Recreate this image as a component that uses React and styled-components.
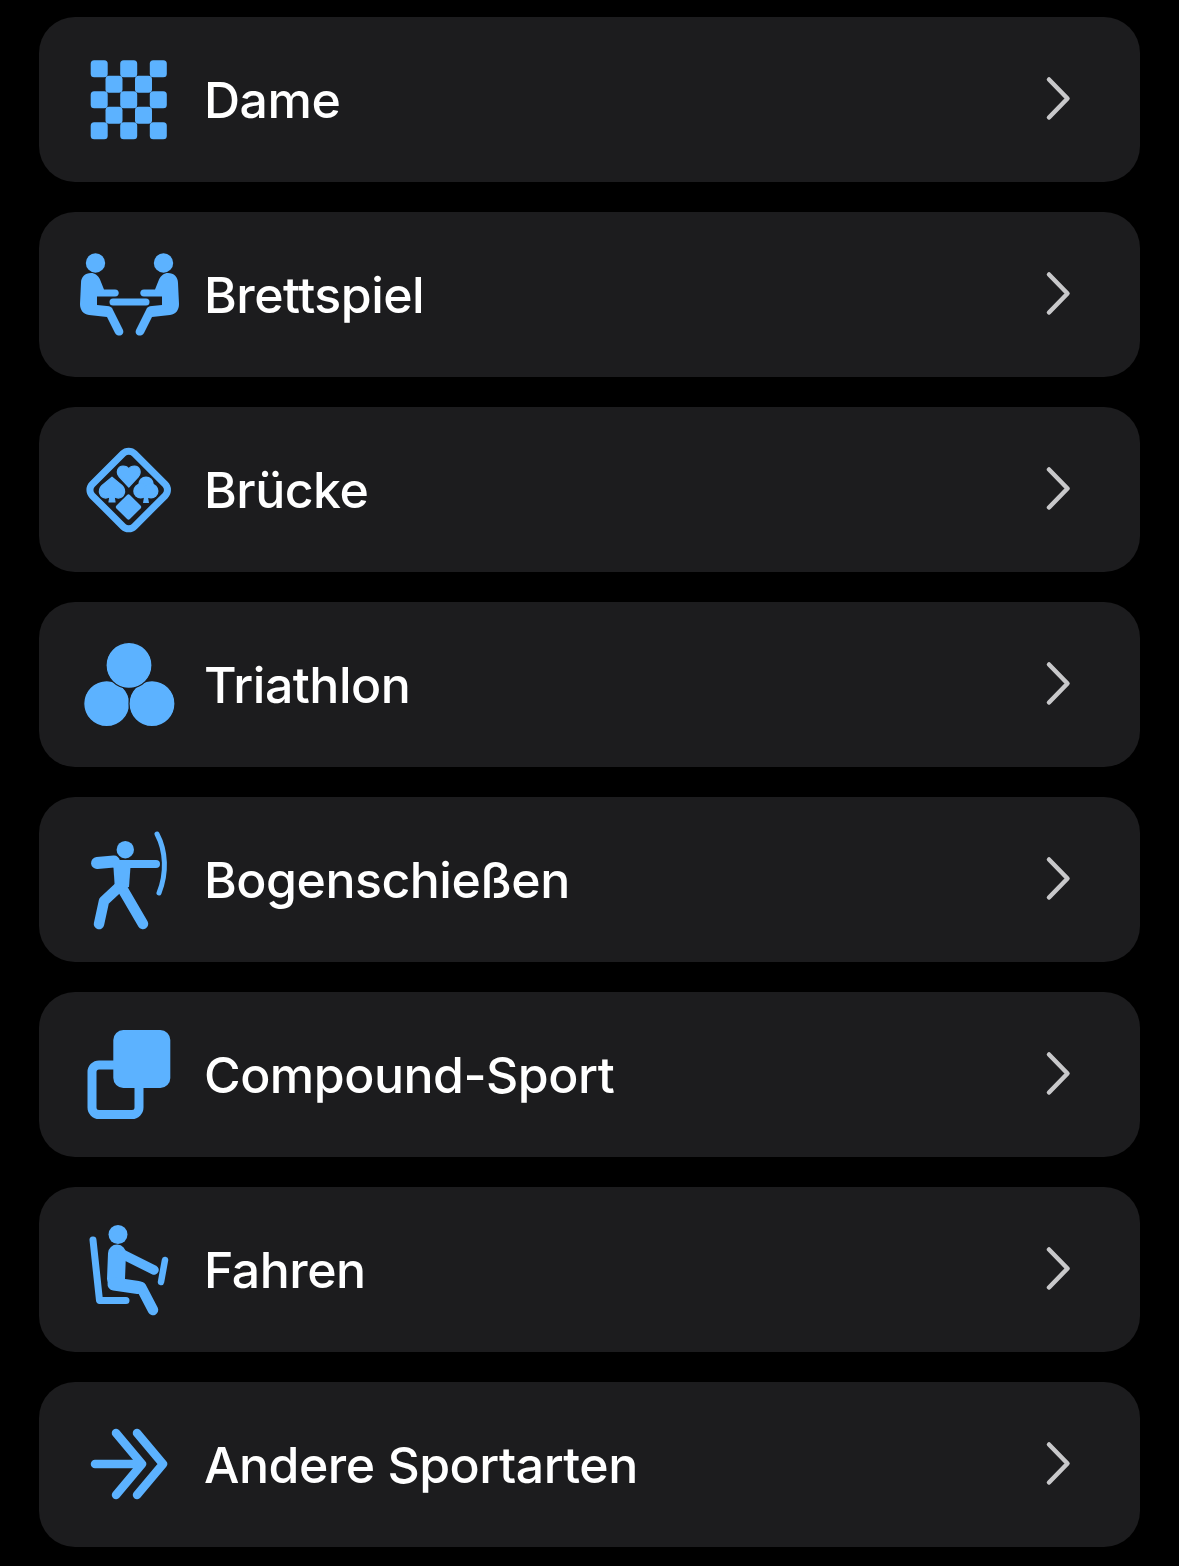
import styled, { createGlobalStyle } from "styled-components";

const GlobalStyle = createGlobalStyle`
  html, body {
    margin: 0;
    background-color: #000;
  }
  * {
    box-sizing: border-box;
  }
`;

const DameIcon = () => (
  <Icon viewBox="0 0 120 110">
    {[23.7, 39.2, 54.7, 70.2, 85.7].map((y, row) =>
      [29.2, 44, 58.7, 73.5, 88.3].map((x, col) =>
        (row + col) % 2 === 0 ? (
          <rect key={x + "-" + y} x={x - 8.5} y={y - 8.5} width="17" height="17" rx="3.5" fill="currentColor" />
        ) : null
      )
    )}
  </Icon>
);

const Player = () => (
  <>
    <circle cx="25.5" cy="23" r="9.7" fill="currentColor" />
    <path
      d="M21 33c-6 0-10 4-10 10L10 64c0 6 3 10 9 11l18 2 8 16c3 5 10 2 8-3L43 70c-1-3-3-4-6-4l-10-1V56.5h18c5 0 5-7 0-7H34l-4-10c-2-4-5-6.5-9-6.5z"
      fill="currentColor"
    />
  </>
);

const BrettspielIcon = () => (
  <Icon viewBox="0 0 120 110">
    <Player />
    <g transform="translate(119 0) scale(-1 1)">
      <Player />
    </g>
    <path d="M43 62H76" stroke="currentColor" strokeWidth="7" strokeLinecap="round" fill="none" />
  </Icon>
);

const BrueckeIcon = () => (
  <Icon viewBox="0 0 120 110">
    <rect
      x="-29.75"
      y="-29.75"
      width="59.5"
      height="59.5"
      rx="8"
      transform="translate(58.7 55) rotate(45)"
      fill="none"
      stroke="currentColor"
      strokeWidth="7"
    />
    <Suit d="M58.8 52L49 41.5C45.5 37 48 31 53 31C56 31 58 32.5 58.8 34C59.6 32.5 61.6 31 64.5 31C69.5 31 72 37 68.5 41.5Z" />
    <Suit d="M42 42.2L52 50.5C57.5 56 53.5 63.5 47.5 63C46 62.8 45 62.1 44 61L45 67H39L40 61C39 62.1 38 62.8 36.5 63C30.5 63.5 26.5 56 32 50.5Z" />
    <circle cx="76" cy="49.3" r="7.8" fill="currentColor" />
    <circle cx="70.7" cy="56" r="7.5" fill="currentColor" />
    <circle cx="81" cy="56" r="7.5" fill="currentColor" />
    <path d="M76 50L79 68H73Z" fill="currentColor" />
    <rect x="-9.5" y="-9.5" width="19" height="19" rx="2" transform="translate(58.5 72) rotate(45)" fill="currentColor" />
  </Icon>
);

const TriathlonIcon = () => (
  <Icon viewBox="0 0 120 110">
    <Ball cx="36.7" cy="73.7" r="23" />
    <Ball cx="82" cy="73.7" r="23" />
    <Ball cx="59" cy="35.3" r="23" />
  </Icon>
);

const BogenIcon = () => (
  <Icon viewBox="0 0 120 110">
    <circle cx="55.3" cy="24.7" r="8.7" fill="currentColor" />
    <path d="M43 35H61L59 62L45 66Z" fill="currentColor" />
    <g fill="none" stroke="currentColor" strokeLinecap="round" strokeLinejoin="round">
      <path d="M27 38L44 36.5" strokeWidth="12" />
      <path d="M46 39H86" strokeWidth="8" />
      <path d="M49 62L34 76L29 99" strokeWidth="10.5" />
      <path d="M52 63L73 99" strokeWidth="10.5" />
      <path d="M87 9C96 26 97 48 89 68" strokeWidth="5" />
    </g>
  </Icon>
);

const CompoundIcon = () => (
  <Icon viewBox="0 0 120 110">
    <rect x="22" y="45" width="47" height="49.5" rx="7" fill="none" stroke="currentColor" strokeWidth="9" />
    <rect x="43.3" y="10" width="57" height="58" rx="10" fill="currentColor" />
  </Icon>
);

const FahrenIcon = () => (
  <Icon viewBox="0 0 120 110">
    <circle cx="48" cy="19.5" r="9.5" fill="currentColor" />
    <g fill="none" stroke="currentColor" strokeLinecap="round" strokeLinejoin="round">
      <path d="M23 25L29.5 85.5H56" strokeWidth="7" />
      <path d="M47 38.5L46 64" strokeWidth="18" />
      <path d="M52 39L84 55" strokeWidth="9.5" />
      <path d="M44 69L68 72.5" strokeWidth="13" />
      <path d="M71 72L83 95" strokeWidth="10.5" />
      <path d="M95 45L91 67" strokeWidth="6.5" />
    </g>
  </Icon>
);

const AndereIcon = () => (
  <Icon viewBox="0 0 120 110">
    <g fill="none" stroke="currentColor" strokeWidth="8.5" strokeLinecap="round" strokeLinejoin="round">
      <path d="M25 54H68" />
      <path d="M46 23L72 54L46 85" />
      <path d="M67 23L93 54L67 85" />
    </g>
  </Icon>
);

const items = [
  { label: "Dame", icon: DameIcon },
  { label: "Brettspiel", icon: BrettspielIcon },
  { label: "Brücke", icon: BrueckeIcon },
  { label: "Triathlon", icon: TriathlonIcon },
  { label: "Bogenschießen", icon: BogenIcon },
  { label: "Compound-Sport", icon: CompoundIcon },
  { label: "Fahren", icon: FahrenIcon },
  { label: "Andere Sportarten", icon: AndereIcon },
];

const App = () => {
  return (
    <Page>
      <GlobalStyle />
      {items.map((item) => (
        <Row key={item.label}>
          <item.icon />
          <Label>{item.label}</Label>
          <Chevron viewBox="0 0 30 46">
            <path d="M5 3.5L23.5 22.5L5 41.5" />
          </Chevron>
        </Row>
      ))}
    </Page>
  );
};

const Page = styled.div`
  width: 1179px;
  height: 1566px;
  background-color: #000;
  padding: 17px 39px 0 39px;
  display: flex;
  flex-direction: column;
  gap: 30px;
  overflow: hidden;
`;

const Row = styled.div`
  flex: none;
  width: 1101px;
  height: 165px;
  display: flex;
  align-items: center;
  padding: 0 66px 0 31px;
  background-color: #1c1c1e;
  border-radius: 36px;
`;

const Icon = styled.svg`
  flex: none;
  width: 120px;
  height: 110px;
  color: #5cb2ff;
`;

const Suit = styled.path`
  fill: currentColor;
  stroke: currentColor;
  stroke-width: 1.2;
  stroke-linejoin: round;
`;

const Ball = styled.circle`
  fill: currentColor;
  stroke: #1c1c1e;
  stroke-width: 1.2;
`;

const Label = styled.div`
  flex: 1;
  margin-left: 14px;
  font-family: Inter, "Liberation Sans", sans-serif;
  font-size: 50px;
  font-weight: 500;
  letter-spacing: -0.5px;
  color: #fff;
  white-space: nowrap;
`;

const Chevron = styled.svg`
  flex: none;
  width: 30px;
  height: 46px;
  margin-bottom: 2px;
  fill: none;
  stroke: #c8c8ca;
  stroke-width: 4.5;
  stroke-linecap: round;
  stroke-linejoin: round;
`;

export default App;
